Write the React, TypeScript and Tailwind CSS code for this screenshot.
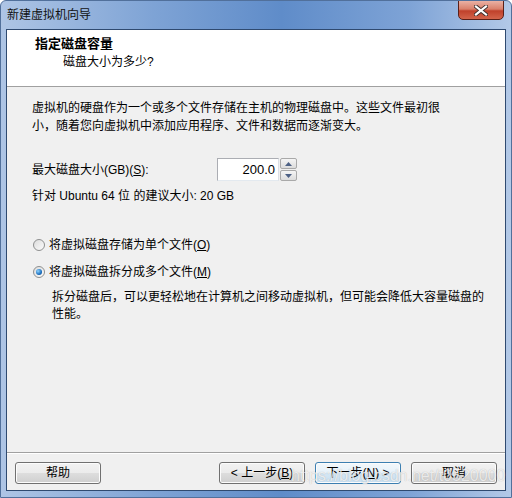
import React from "react";

const font = { fontFamily: '"Liberation Sans", "Noto Sans CJK SC", sans-serif' };

function WinButton({ children, primary }: { children: React.ReactNode; primary?: boolean }) {
  return (
    <button
      className={
        "w-[86px] h-[22px] rounded-[3px] border text-[12px] leading-none text-black flex items-center justify-center shadow-[inset_0_0_0_1px_#fcfcfc] " +
        (primary
          ? "border-[#3c7fb1] bg-[linear-gradient(180deg,#f2f8fc_0%,#e6f1f9_50%,#d5e7f4_51%,#c8dff0_100%)] shadow-[inset_0_0_0_1px_#a9d7f3]"
          : "border-[#707070] bg-[linear-gradient(180deg,#f2f2f2_0%,#ebebeb_50%,#dddddd_51%,#cfcfcf_100%)]")
      }
    >
      {children}
    </button>
  );
}

function Radio({ checked }: { checked?: boolean }) {
  return (
    <span className="w-[12px] h-[12px] rounded-full border border-[#8e8f8f] bg-[linear-gradient(135deg,#dcdcdc,#fbfbfb)] flex items-center justify-center">
      {checked && (
        <span className="w-[6px] h-[6px] rounded-full bg-[radial-gradient(circle_at_35%_35%,#8fd4ff,#1b6fbf_60%,#0d3f7a)]" />
      )}
    </span>
  );
}

export default function App() {
  return (
    <div
      style={font}
      className="relative w-[512px] h-[498px] rounded-t-[6px] border border-[#51709b] bg-[linear-gradient(90deg,#aec5e5_0%,#7ea3d5_30%,#5f8cc9_55%,#7ea3d6_80%,#b3c9e7_100%)] flex flex-col overflow-hidden"
    >
      {/* title bar */}
      <div className="h-[28px] flex items-center pl-[6px] text-[12px] text-[#111] shrink-0">新建虚拟机向导</div>

      <div className="absolute top-[-1px] right-[7px] w-[46px] h-[20px] rounded-b-[5px] border border-[#5a2018] bg-[linear-gradient(180deg,#eab1a4_0%,#d9806b_45%,#c0412b_55%,#d3644b_100%)] flex items-center justify-center">
        <svg width="14" height="11" viewBox="0 0 14 11">
          <path d="M2 1.5 L12 9.5 M12 1.5 L2 9.5" stroke="#40302e" strokeWidth="4" strokeLinecap="square" />
          <path d="M2 1.5 L12 9.5 M12 1.5 L2 9.5" stroke="#ffffff" strokeWidth="2.2" strokeLinecap="square" />
        </svg>
      </div>

      {/* client area */}
      <div className="mx-[5px] mb-[6px] flex-1 border border-[#2f4a70] bg-[#f0f0f0] flex flex-col text-black">
        <div className="h-[57px] bg-white border-b border-[#a0a0a0] shrink-0">
          <div className="pl-[28px] pt-[6px] text-[13px] font-bold leading-[16px]">指定磁盘容量</div>
          <div className="pl-[56px] pt-[2px] text-[12px] leading-[16px]">磁盘大小为多少?</div>
        </div>

        <div className="flex-1 flex flex-col pl-[25px] text-[12px]">
          <p className="pt-[12px] leading-[18px]">
            虚拟机的硬盘作为一个或多个文件存储在主机的物理磁盘中。这些文件最初很
            <br />
            小，随着您向虚拟机中添加应用程序、文件和数据而逐渐变大。
          </p>

          <div className="mt-[23px] flex items-center h-[23px]">
            <span className="w-[185px]">
              最大磁盘大小(GB)(<span className="underline">S</span>):
            </span>
            <div className="w-[62px] h-[23px] border border-[#abadb3] border-r-[#dbdfe6] border-b-[#e3e9ef] bg-white flex items-center justify-end pr-[3px] text-[13px]">
              200.0
            </div>
            <div className="ml-[1px] w-[17px] h-[23px] flex flex-col gap-[1px]">
              <div className="flex-1 border border-[#a9a9a9] rounded-[2px] bg-[linear-gradient(180deg,#f5f5f5,#dcdcdc)] flex items-center justify-center">
                <svg width="7" height="4" viewBox="0 0 7 4"><path d="M3.5 0 L7 4 L0 4 Z" fill="#4d6185" /></svg>
              </div>
              <div className="flex-1 border border-[#a9a9a9] rounded-[2px] bg-[linear-gradient(180deg,#f5f5f5,#dcdcdc)] flex items-center justify-center">
                <svg width="7" height="4" viewBox="0 0 7 4"><path d="M0 0 L7 0 L3.5 4 Z" fill="#4d6185" /></svg>
              </div>
            </div>
          </div>

          <p className="mt-[6px] leading-[18px]">针对 Ubuntu 64 位 的建议大小: 20 GB</p>

          <label className="mt-[31px] flex items-center gap-[4px] leading-[18px] pl-[1px]">
            <Radio />
            <span>
              将虚拟磁盘存储为单个文件(<span className="underline">O</span>)
            </span>
          </label>

          <label className="mt-[9px] flex items-center gap-[4px] leading-[18px] pl-[1px]">
            <Radio checked />
            <span>
              将虚拟磁盘拆分成多个文件(<span className="underline">M</span>)
            </span>
          </label>

          <p className="mt-[8px] pl-[20px] leading-[17px]">
            拆分磁盘后，可以更轻松地在计算机之间移动虚拟机，但可能会降低大容量磁盘的
            <br />
            性能。
          </p>

          <div className="flex-1" />
        </div>

        <div className="border-t border-[#a0a0a0] shrink-0">
          <div className="border-t border-white flex items-center pt-[8px] pb-[6px] px-[8px] text-[12px]">
            <WinButton>帮助</WinButton>
            <div className="flex-1" />
            <div className="flex gap-[10px]">
              <WinButton>
                &lt; 上一步(<span className="underline">B</span>)
              </WinButton>
              <WinButton primary>
                下一步(<span className="underline">N</span>) &gt;
              </WinButton>
              <WinButton>取消</WinButton>
            </div>
          </div>
        </div>
      </div>

      {/* watermark */}
      <div className="absolute left-[290px] top-[463px] text-[16px] text-white/75 [text-shadow:0_0_1px_rgba(0,0,0,0.25)] pointer-events-none">
        https://blog.csdn.net/t0520000
      </div>
    </div>
  );
}
